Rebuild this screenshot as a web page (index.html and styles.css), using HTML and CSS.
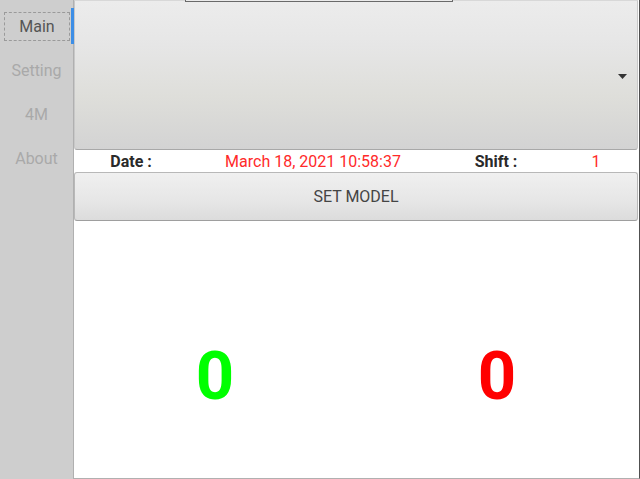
FILE: index.html
```html
<!DOCTYPE html>
<html>
<head>
<meta charset="utf-8">
<link rel="stylesheet" href="styles.css">
</head>
<body>
<div class="app">
  <nav class="sidebar">
    <div class="tab active"><span class="tab-label">Main</span></div>
    <div class="tab"><span class="tab-label">Setting</span></div>
    <div class="tab"><span class="tab-label">4M</span></div>
    <div class="tab"><span class="tab-label">About</span></div>
    <div class="indicator"></div>
  </nav>
  <main class="main">
    <div class="overlap-edge"></div>
    <div class="combo">
      <svg class="arrow" width="9" height="5" viewBox="0 0 9 5"><path d="M0 0H9L4.5 5Z" fill="#333"/></svg>
    </div>
    <div class="info">
      <span class="label">Date :</span>
      <span class="value">March 18, 2021 10:58:37</span>
      <span class="label">Shift :</span>
      <span class="value">1</span>
    </div>
    <button class="set-model">SET MODEL</button>
    <div class="counters">
      <span class="count ok">0</span>
      <span class="count ng">0</span>
    </div>
  </main>
</div>
</body>
</html>
```
FILE: styles.css
```css
* { box-sizing: border-box; }
html, body { margin: 0; padding: 0; }
body {
  width: 640px;
  height: 479px;
  overflow: hidden;
  background: #ffffff;
  font-family: Roboto, "Liberation Sans", sans-serif;
}
.app {
  display: flex;
  height: 479px;
}
.sidebar {
  position: relative;
  width: 74px;
  flex: none;
  background: #cecece;
  border-right: 1px solid #b0b0b0;
  padding-top: 4px;
  display: flex;
  flex-direction: column;
}
.tab {
  height: 44px;
  display: flex;
  align-items: center;
  justify-content: center;
  font-size: 16px;
  color: #a9a9a9;
}
.tab.active {
  color: #555555;
}
.tab.active .tab-label {
  width: 67px;
  height: 29px;
  margin-left: 4px;
  margin-right: 3px;
  display: flex;
  align-items: center;
  justify-content: center;
  border: 1px dashed #9a9a9a;
}
.indicator {
  position: absolute;
  right: -1px;
  top: 8px;
  width: 3px;
  height: 36px;
  background: #3d8ee6;
}
.main {
  position: relative;
  flex: 1;
  display: flex;
  flex-direction: column;
  border-right: 1px solid #505050;
  border-bottom: 1px solid #b0b0b0;
  padding-right: 1px;
}
.overlap-edge {
  position: absolute;
  left: 111px;
  top: 0;
  width: 268px;
  height: 2px;
  border: 1px solid #6a6a6a;
  border-top: none;
  background: #ebebeb;
  z-index: 2;
}
.combo {
  position: relative;
  height: 150px;
  flex: none;
  background: linear-gradient(#ececec, #e6e6e6 30%, #dededa 65%, #d3d3d3);
  border: 1px solid #c8c8c8;
  border-top: 1px solid #d8d8d8;
  border-bottom: 1px solid #a8a8a8;
  border-radius: 0 0 3px 3px;
}
.arrow {
  position: absolute;
  left: 543px;
  top: 73px;
}
.info {
  height: 22px;
  flex: none;
  display: grid;
  grid-template-columns: 114px 250px 116px 1fr;
  align-items: center;
  text-align: center;
  font-size: 16px;
}
.label {
  font-weight: bold;
  color: #2a2a2a;
}
.value {
  color: #ff2a2a;
}
.set-model {
  height: 49px;
  flex: none;
  margin: 0;
  padding: 0;
  font-family: Roboto, "Liberation Sans", sans-serif;
  font-size: 16px;
  color: #444444;
  background: linear-gradient(#f0f0f0, #e6e6e6 60%, #dcdcdc);
  border: 1px solid #b8b8b8;
  border-bottom: 1px solid #9e9e9e;
  border-radius: 3px;
}
.counters {
  flex: 1;
  display: grid;
  grid-template-columns: 1fr 1fr;
  align-items: center;
  justify-items: center;
  padding-top: 54px;
  padding-bottom: 0;
  background: #ffffff;
}
.count {
  font-size: 67px;
  font-weight: bold;
  line-height: 1;
}
.ok { color: #00ff00; }
.ng { color: #ff0000; }
```
